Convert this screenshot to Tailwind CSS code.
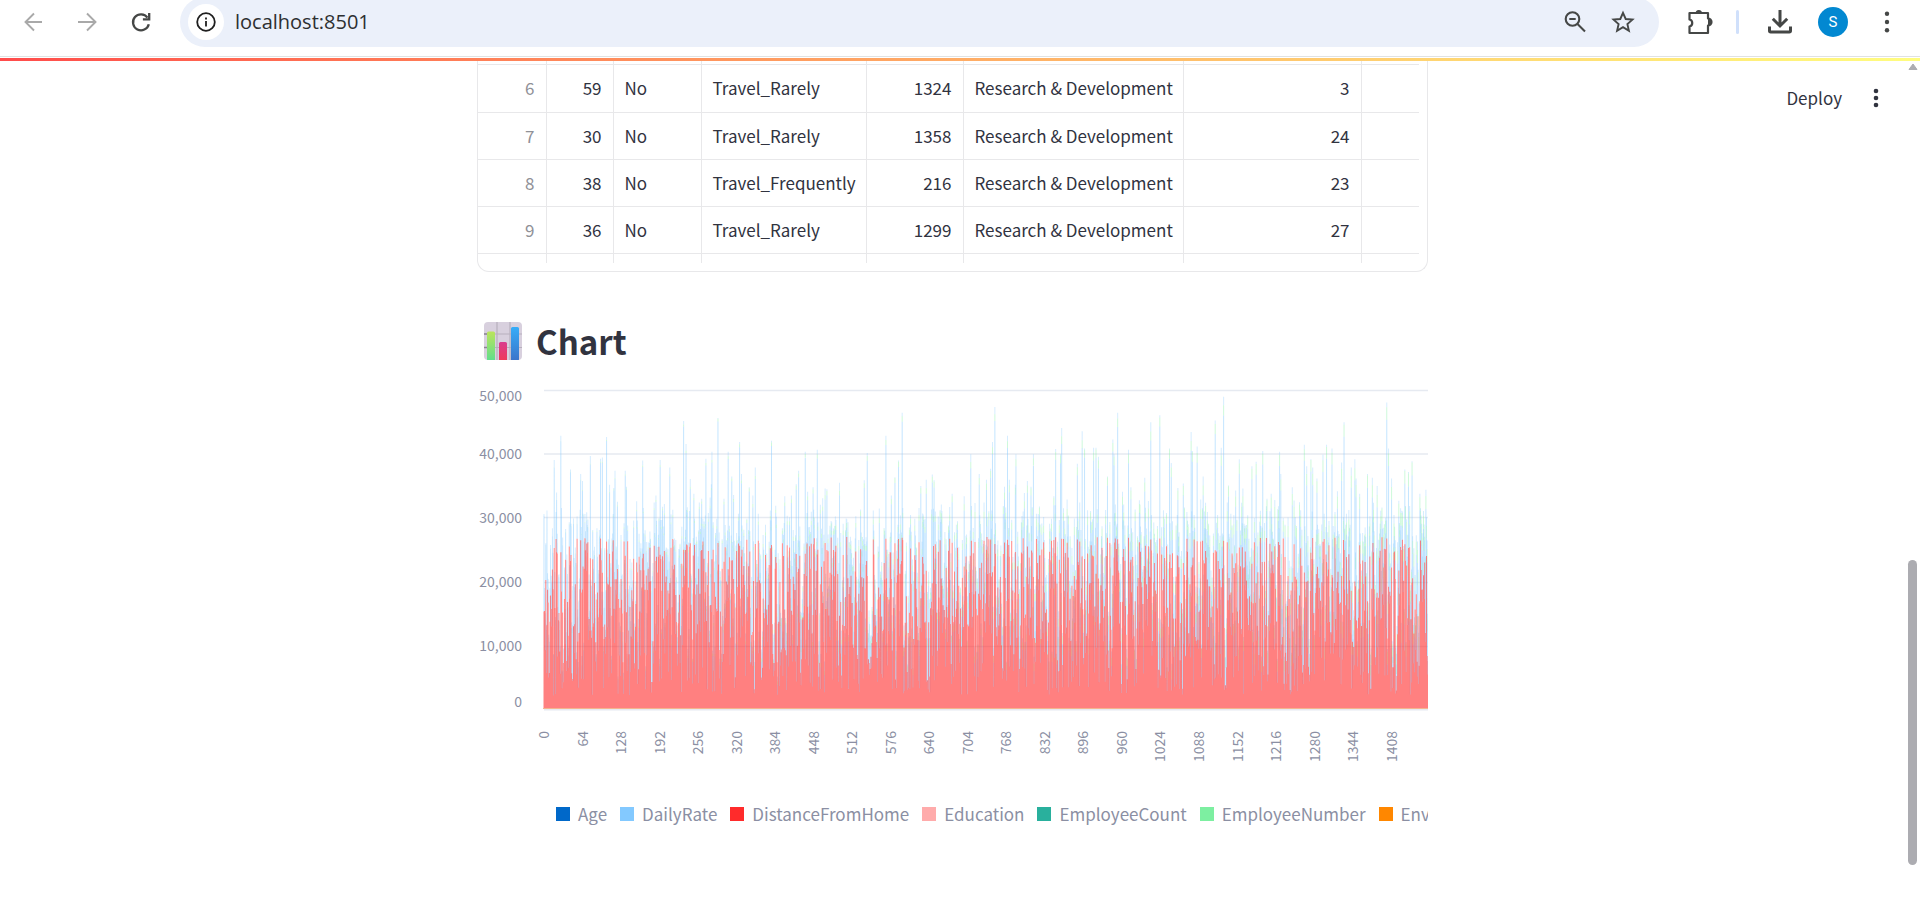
<!DOCTYPE html>
<html lang="en">
<head>
<meta charset="utf-8">
<title>localhost:8501</title>
<script src="https://cdn.jsdelivr.net/npm/@tailwindcss/browser@4"></script>
</head>
<body class="h-screen overflow-hidden bg-white flex flex-col text-[#31333f] font-['Noto_Sans_CJK_SC',sans-serif]">

<header class="shrink-0 overflow-hidden border-b border-[#e0e2e2] pb-[9px]">
  <div class="flex items-center h-[50px] -mt-[3px] pl-[22px] pr-[21px]">
    <button class="size-6 mr-[29px]" aria-label="Back"><svg viewBox="0 0 24 24" class="size-6" fill="none" stroke="#a9a9a9" stroke-width="1.9"><path d="M20 12H4M12 3.500 3.500 12l8.500 8.500"/></svg></button>
    <button class="size-6 mr-[30px]" aria-label="Forward"><svg viewBox="0 0 24 24" class="size-6" fill="none" stroke="#a9a9a9" stroke-width="1.900"><path d="M3 12h17M12 3.500l8.500 8.500-8.500 8.500"/></svg></button>
    <button class="size-6 mr-[27px]" aria-label="Reload"><svg viewBox="0 0 24 24" class="size-6" fill="none" stroke="#454746" stroke-width="2.300"><path d="M19.800 14.200A8 8 0 1 1 18.500 7.600"/><path d="M20.200 3v6.300h-6.300"/></svg></button>
    <div class="flex flex-1 items-center h-[50px] rounded-full bg-[#ebf0fa] pl-2 pr-6">
      <button class="flex size-9 items-center justify-center rounded-full bg-white" aria-label="Site information"><svg viewBox="0 0 20 20" class="size-5" fill="none" stroke="#1f1f1f" stroke-width="1.800"><circle cx="10" cy="10" r="8.800"/><path d="M10 9v5.500M10 5.500v2"/></svg></button>
      <input class="ml-[11px] min-w-0 flex-1 bg-transparent font-['Open_Sans',sans-serif] text-[20px] leading-[28px] text-[#2d2f31] outline-none" value="localhost:8501" aria-label="Address">
      <button class="size-6 mr-6" aria-label="Zoom"><svg viewBox="0 0 24 24" class="size-6" fill="none" stroke="#454746" stroke-width="2.100"><circle cx="9.500" cy="9" r="6.800"/><path d="M14.500 14l7.500 7.500M6.300 9h6.400"/></svg></button>
      <button class="size-6" aria-label="Bookmark"><svg viewBox="0 0 24 24" class="size-6" fill="none" stroke="#454746" stroke-width="1.900"><path d="M12 2.800l2.700 6.200 6.800.6-5.100 4.500 1.500 6.600L12 17.200l-5.900 3.500 1.500-6.600-5.100-4.500 6.800-.6z"/></svg></button>
    </div>
    <button class="ml-7 size-[26px]" aria-label="Extensions"><svg viewBox="0 0 26 26" class="size-[26px]"><path d="M2.500 4h18.500v5.500a3.500 3.500 0 0 1 0 7V24H2.500v-6.500a3.600 3.600 0 0 0 0-7z" fill="none" stroke="#454746" stroke-width="2.200" stroke-linejoin="round"/><path d="M8.500 4.500a3.300 3.500 0 0 1 6.600 0zM21 9.700a3.300 3.300 0 0 1 0 6.600z" fill="#454746"/></svg></button>
    <span class="ml-[23px] h-6 w-[3px] rounded bg-[#d0e0fb]"></span>
    <button class="ml-7 h-6 w-[26px]" aria-label="Downloads"><svg viewBox="0 0 26 24" class="h-6 w-[26px]" fill="none" stroke="#454746" stroke-width="3"><path d="M13 0v15M5.800 8.800 13 16l7.200-7.200M2.500 16.500v4.300a1.200 1.200 0 0 0 1.200 1.200h18.600a1.200 1.200 0 0 0 1.200-1.200v-4.300"/></svg></button>
    <button class="ml-[25px] size-[30px] rounded-full bg-[#0288d1] text-white text-[15px] font-['Roboto',sans-serif]" aria-label="Profile">S</button>
    <button class="ml-[27px] size-6" aria-label="Browser menu"><svg viewBox="0 0 24 24" class="size-6" fill="#454746"><circle cx="12" cy="3.800" r="2.200"/><circle cx="12" cy="12" r="2.200"/><circle cx="12" cy="20.200" r="2.200"/></svg></button>
  </div>
</header>

<div class="mt-px h-[3px] shrink-0 bg-linear-to-r from-[#ff4b4b] to-[#fffd80]"></div>

<div class="relative flex min-h-0 flex-1 overflow-hidden">
  <main class="min-w-0 flex-1">
    <div class="mx-auto max-w-[951px]">

      <section class="rounded-b-xl border border-t-0 border-[#e8e8ea] pb-[8px] pr-[8px]">
        <table class="w-full table-fixed border-collapse whitespace-nowrap text-[17px] leading-[20px] [&_td]:border-b [&_td]:border-r [&_td]:border-[#e8e8ea] [&_td]:px-[11px] [&_td]:py-0 [&_td:last-child]:border-r-0 [&_tr:last-child_td]:border-b-0">
          <colgroup><col class="w-[68px]"><col class="w-[67px]"><col class="w-[88px]"><col class="w-[165px]"><col class="w-[97px]"><col class="w-[220px]"><col class="w-[178px]"><col></colgroup>
          <tbody>
            <tr class="h-[3px] text-[0px] leading-[0px]"><td></td><td></td><td></td><td></td><td></td><td></td><td></td><td></td></tr>
            <tr class="h-12"><td class="text-right text-[#909197]">6</td><td class="text-right">59</td><td>No</td><td>Travel_Rarely</td><td class="text-right">1324</td><td>Research &amp; Development</td><td class="text-right">3</td><td></td></tr>
            <tr class="h-[47px]"><td class="text-right text-[#909197]">7</td><td class="text-right">30</td><td>No</td><td>Travel_Rarely</td><td class="text-right">1358</td><td>Research &amp; Development</td><td class="text-right">24</td><td></td></tr>
            <tr class="h-[47px]"><td class="text-right text-[#909197]">8</td><td class="text-right">38</td><td>No</td><td>Travel_Frequently</td><td class="text-right">216</td><td>Research &amp; Development</td><td class="text-right">23</td><td></td></tr>
            <tr class="h-[47px]"><td class="text-right text-[#909197]">9</td><td class="text-right">36</td><td>No</td><td>Travel_Rarely</td><td class="text-right">1299</td><td>Research &amp; Development</td><td class="text-right">27</td><td></td></tr>
            <tr class="h-[10px]"><td></td><td></td><td></td><td></td><td></td><td></td><td></td><td></td></tr>
          </tbody>
        </table>
      </section>

      <h2 class="mt-[45px] flex h-12 items-center pl-[7px] text-[33px] font-bold leading-[48px]">
        <svg viewBox="0 0 38 38" class="mr-[14px] size-[38px]" aria-hidden="true">
          <defs>
            <linearGradient id="g" x2="0" y2="1"><stop stop-color="#bbe45c"/><stop offset="1" stop-color="#5fdd8d"/></linearGradient>
            <linearGradient id="p" x2="0" y2="1"><stop stop-color="#d93c8e"/><stop offset="1" stop-color="#f03a58"/></linearGradient>
            <linearGradient id="b" x2="0" y2="1"><stop stop-color="#36adf8"/><stop offset="1" stop-color="#3b73c9"/></linearGradient>
            <clipPath id="r"><rect width="38" height="38" rx="4"/></clipPath>
          </defs>
          <g clip-path="url(#r)">
            <rect width="38" height="38" fill="#d8d0de"/>
            <path d="M0 12h38M0 25.500h38M13 0v38M26 0v38" stroke="#b8b0bd" stroke-width="1.200"/>
            <path d="M0 12h3M0 25.500h3" stroke="#8d8594" stroke-width="1.500"/>
            <path d="M3 39V11a1.500 1.500 0 0 1 1.500-1.500h5A1.500 1.500 0 0 1 11 11v28z" fill="url(#g)"/>
            <path d="M15 39V21.500a1.500 1.500 0 0 1 1.500-1.500h5a1.500 1.500 0 0 1 1.500 1.500V39z" fill="url(#p)"/>
            <path d="M27 39V6.500A1.500 1.500 0 0 1 28.500 5h5A1.500 1.500 0 0 1 35 6.500V39z" fill="url(#b)"/>
          </g>
        </svg>Chart
      </h2>

      <figure class="mt-[6px] overflow-hidden">
        <svg id="chart" class="block h-[412px] w-[951px]" role="img" aria-label="Stacked bar chart of the numeric columns">
          <g stroke="#e6eaf1" stroke-width="1.300">
            <path d="M67 19.500H951M67 83H951M67 146.500H951M67 211.500H951M67 275.500H951"/>
            <path d="M67 338.800H951" stroke-width="1.600"/>
          </g>
          <g id="bars"></g>
          <path d="M66 337.500H951" stroke="#f5b58f" stroke-width="1"/>
          <g id="yaxis" class="fill-[#8b8fa3] text-[14px]" text-anchor="end"></g>
          <g id="xaxis" class="fill-[#8b8fa3] text-[14px]" text-anchor="end"></g>
        </svg>
        <figcaption class="mt-[19px] flex items-center gap-[13px] whitespace-nowrap pl-[79px] text-[17px] leading-[24px] text-[#8b8fa3]">
          <span class="flex shrink-0 items-center gap-2"><i class="size-[14px] bg-[#0068c9]"></i>Age</span>
          <span class="flex shrink-0 items-center gap-2"><i class="size-[14px] bg-[#83c9ff]"></i>DailyRate</span>
          <span class="flex shrink-0 items-center gap-2"><i class="size-[14px] bg-[#ff2b2b]"></i>DistanceFromHome</span>
          <span class="flex shrink-0 items-center gap-2"><i class="size-[14px] bg-[#ffabab]"></i>Education</span>
          <span class="flex shrink-0 items-center gap-2"><i class="size-[14px] bg-[#29b09d]"></i>EmployeeCount</span>
          <span class="flex shrink-0 items-center gap-2"><i class="size-[14px] bg-[#7defa1]"></i>EmployeeNumber</span>
          <span class="flex shrink-0 items-center gap-2"><i class="size-[14px] bg-[#ff8700]"></i>EnvironmentSatisfaction</span>
        </figcaption>
      </figure>
    </div>
  </main>

  <div class="absolute right-8 top-[23px] flex items-center gap-[22px]">
    <button class="text-[17px] leading-[28px]">Deploy</button>
    <button class="size-6" aria-label="App menu"><svg viewBox="0 0 24 24" class="size-6" fill="#31333f"><circle cx="12" cy="5" r="2.300"/><circle cx="12" cy="12" r="2.300"/><circle cx="12" cy="19" r="2.300"/></svg></button>
  </div>

  <aside class="flex w-[15px] flex-col items-center pt-[2px]" aria-hidden="true">
    <svg viewBox="0 0 10 8" class="h-2 w-[10px]"><path d="M5 1 9 6.500H1z" fill="#acacb1" stroke="#acacb1" stroke-linejoin="round"/></svg>
    <div class="mb-[33px] mt-auto h-[305px] w-[9px] rounded-full bg-[#acacb1]"></div>
  </aside>
</div>

<script>
// Rows whose stacked total stands out: [row, total in thousands]
const PEAKS = [[0,30.6],[17,39.1],[21,34],[28,42.9],[44,37.6],[61,36.9],[64,35.8],[77,39.7],[94,39.3],[97,39.5],[104,42.7],[109,35.2],[116,34.7],[118,37.4],[135,37.4],[137,34.9],[154,32.6],[164,39],[183,32.4],[186,33.5],[193,39.1],[200,32.2],[209,37.9],[232,45.2],[236,41.6],[243,36.1],[249,33.8],[262,33],[269,39.3],[276,33.2],[278,35.3],[279,40.4],[289,45.7],[299,33],[306,40.4],[312,36.5],[315,33.6],[325,41.9],[328,36.9],[341,34.8],[347,33.5],[351,37.9],[378,42.1],[385,31.9],[400,33.4],[411,33.5],[419,35.3],[423,37.4],[434,40.4],[438,34.1],[447,34.8],[454,40.7],[463,33.1],[467,34.6],[470,34.5],[491,35.5],[532,35.9],[537,40.2],
[568,42.9],[577,33.5],[583,36.4],[589,39],[595,46.5],[626,35],[635,36],[645,36.8],[648,35.9],[658,31.2],[678,33.8],[698,33.4],[709,40],[723,36.9],[735,36],[742,37.7],[745,41.9],[749,47.4],[765,34.9],[770,42.9],[773,36],[783,35.2],[784,40],[798,33.9],[803,35.8],[809,34.9],[813,40],[847,33.4],[850,40.8],[858,40],[860,44.1],[869,32.9],[886,38.5],[894,43.6],[898,40.9],[913,41],[917,41],[921,39.6],[936,36.5],[945,42.3],[947,40],[953,46.5],[961,34.1],[971,40.7],[975,34.8],[990,32.1],[998,36.3],
[1008,45],[1023,46.1],[1039,40.9],[1042,38.6],[1053,34.7],[1062,35.4],[1075,43.5],[1077,40.5],[1085,41.2],[1095,36.5],[1115,45.3],[1125,41],[1129,49],[1137,35.1],[1149,34.3],[1155,39.2],[1161,34.6],[1176,38.1],[1183,38.8],[1194,40.5],[1201,33],[1208,33.8],[1222,40.4],[1224,36.9],[1243,34.8],[1263,41.5],[1267,38.1],[1274,39.2],[1277,37.9],[1284,36.2],[1294,39.9],[1300,41.5],[1309,40.9],[1318,34.2],[1325,38.7],[1329,45],[1341,37.9],[1347,39.2],[1349,36.2],[1355,33.8],[1368,36.9],[1376,36.3],[1384,35],[1400,48.1],[1403,40.9],[1408,36.2],[1420,32.7],[1430,37.6],[1436,37.2],[1442,38.9],[1455,33.8],[1465,34.4]];
const ROWS = 1470, STEP = 0.602, WIDTH = 0.95, X0 = 67, Y0 = 338, UNIT = 6.37;
const peak = new Map(PEAKS);
let seed = 20240;
const rnd = () => { seed = (seed * 1664525 + 1013904223) >>> 0; return seed / 4294967296; };
const paths = { rate: '', income: '', number: '', daily: '' };
const slab = (x, from, size) => {
  const top = Y0 - (from + size) * UNIT;
  return `M${x.toFixed(2)} ${top.toFixed(2)}h${WIDTH}v${(size * UNIT).toFixed(2)}h-${WIDTH}z`;
};
for (let i = 0; i < ROWS; i++) {
  const x = X0 + i * STEP - 0.5;
  let rate = 2.1 + rnd() * 24.9;
  const number = i * 2.07 / ROWS;
  const daily = 0.1 + rnd() * 1.4;
  const cap = 25 + rnd() * 8;
  let income = rnd() < 0.75 ? 1.5 + rnd() * 6 : 6 + rnd() * 13;
  if (peak.has(i)) {
    const rest = peak.get(i) - number - daily;
    const low = Math.max(2.1, rest - 19.8), high = Math.min(27, rest - 2);
    rate = low + rnd() * (high - low);
    income = rest - rate;
  } else {
    income = Math.min(income, Math.max(1 + rnd() * 3, cap - rate - number - daily));
  }
  paths.rate += slab(x, 0, rate);
  paths.income += slab(x, rate, income);
  paths.number += slab(x, rate + income, number);
  paths.daily += slab(x, rate + income + number, daily);
}
document.getElementById('bars').innerHTML =
  `<path fill="#83c9ff" fill-opacity=".35" d="${paths.daily}"/><path fill="#7defa1" fill-opacity=".4" d="${paths.number}"/>` +
  `<path fill="#83c9ff" fill-opacity=".5" d="${paths.income}"/><path fill="#ff2b2b" fill-opacity=".6" d="${paths.rate}"/>`;
document.getElementById('yaxis').innerHTML =
  [['50,000', 30], ['40,000', 88], ['30,000', 152], ['20,000', 216], ['10,000', 280], ['0', 336]]
    .map(([t, y]) => `<text x="45" y="${y}">${t}</text>`).join('');
let ticks = '';
for (let v = 0; v <= 1408; v += 64) {
  const x = Math.round(X0 + 5 + v * STEP);
  ticks += `<text transform="translate(${x} 360) rotate(-90)">${v}</text>`;
}
document.getElementById('xaxis').innerHTML = ticks;
</script>
</body>
</html>
